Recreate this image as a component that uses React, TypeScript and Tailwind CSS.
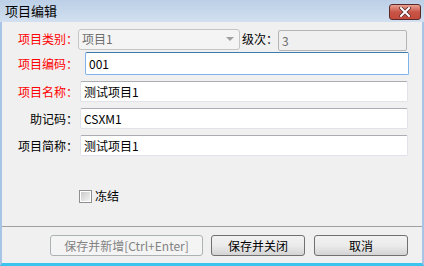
import React from "react";

const cjk = { fontFamily: '"Noto Sans CJK SC", "Liberation Sans", sans-serif' };

function Label({ text, red, w }: { text: string; red?: boolean; w: string }) {
  return (
    <div
      className={`${w} shrink-0 text-right text-[12px] leading-[14px] ${red ? "text-[#ff0000]" : "text-black"}`}
      style={cjk}
    >
      {text}
    </div>
  );
}

function TextBox({ value, focused, className }: { value: string; focused?: boolean; className: string }) {
  return (
    <div
      className={`${className} flex items-center bg-white border rounded-[2px] pl-[3px] text-[12px] text-black ${
        focused
          ? "border-[#7eb4ea] border-t-[#3d7bad]"
          : "border-[#e2e3ea] border-t-[#abadb3]"
      }`}
      style={cjk}
    >
      {value}
    </div>
  );
}

export default function App() {
  return (
    <div className="w-[424px] h-[266px] flex flex-col bg-[#f0f0f0] overflow-hidden" style={cjk}>
      {/* title bar */}
      <div className="h-[22px] shrink-0 flex items-center justify-between pl-[5px] pr-[3px] bg-gradient-to-b from-[#bccfe6] to-[#d2e0f0]">
        <span className="text-[13px] leading-[16px] text-black" style={cjk}>
          项目编辑
        </span>
        <div className="w-[32px] h-[16px] mt-[2px] rounded-[3px] border border-[#5a2a2a] bg-gradient-to-b from-[#e8a093] via-[#c75446] to-[#c44a3c] flex items-center justify-center">
          <svg width="12" height="10" viewBox="0 0 12 10">
            <path d="M2 1 L10 9 M10 1 L2 9" stroke="#5a2a2a" strokeWidth="3.6" strokeLinecap="square" />
            <path d="M2 1 L10 9 M10 1 L2 9" stroke="#ffffff" strokeWidth="2" strokeLinecap="square" />
          </svg>
        </div>
      </div>

      {/* client area */}
      <div className="flex-1 flex flex-col border-l-2 border-r-2 border-b-[3px] border-l-[#a7c4e6] border-r-[#a7c4e6] border-b-[#3cc3ee] bg-[#f0f0f0]">
        {/* row 1 */}
        <div className="flex items-center mt-[6px] h-[22px]">
          <Label text="项目类别：" red w="w-[76px]" />
          <div className="w-[162px] h-[21px] flex items-center justify-between border border-[#c5c5c5] rounded-[3px] bg-[#f4f4f4] pl-[3px] pr-[5px] text-[12px] text-[#6d6d6d]">
            <span>项目1</span>
            <svg width="8" height="5" viewBox="0 0 8 5">
              <path d="M0 0 L8 0 L4 4 Z" fill="#a0a0a0" />
            </svg>
          </div>
          <Label text="级次：" w="w-[38px]" />
          <div className="w-[129px] h-[21px] mt-[3px] flex items-center border border-[#b5b5b5] rounded-[2px] bg-[#f0f0f0] pl-[3px] text-[12px] text-[#6d6d6d]">
            3
          </div>
        </div>

        {/* row 2 */}
        <div className="flex items-center mt-[2px] h-[23px]">
          <Label text="项目编码：" red w="w-[76px]" />
          <TextBox value="001" focused className="ml-[7px] w-[324px] h-[23px]" />
        </div>

        {/* row 3 */}
        <div className="flex items-center mt-[6px] h-[21px]">
          <Label text="项目名称：" red w="w-[76px]" />
          <TextBox value="测试项目1" className="ml-[2px] w-[328px] h-[21px]" />
        </div>

        {/* row 4 */}
        <div className="flex items-center mt-[6px] h-[21px]">
          <Label text="助记码：" w="w-[76px]" />
          <TextBox value="CSXM1" className="ml-[2px] w-[328px] h-[21px]" />
        </div>

        {/* row 5 */}
        <div className="flex items-center mt-[6px] h-[21px]">
          <Label text="项目简称：" w="w-[76px]" />
          <TextBox value="测试项目1" className="ml-[2px] w-[328px] h-[21px]" />
        </div>

        {/* checkbox */}
        <div className="flex items-center mt-[33px] ml-[77px] h-[14px]">
          <div className="w-[13px] h-[13px] border border-[#8f8f8f] bg-white flex items-center justify-center">
            <div className="w-[9px] h-[9px] bg-gradient-to-br from-[#cbcbcb] to-[#f4f4f4]" />
          </div>
          <span className="ml-[3px] text-[12px] text-black">冻结</span>
        </div>

        {/* separator */}
        <div className="mt-[23px] h-px bg-[#a0a0a0]" />

        {/* buttons */}
        <div className="flex mt-[8px] ml-[48px] gap-[8px]">
          <div className="w-[153px] h-[21px] flex items-center justify-center rounded-[3px] border border-[#adb2b5] bg-[#f4f4f4] text-[12px] text-[#838383]">
            保存并新增[Ctrl+Enter]
          </div>
          <div className="w-[94px] h-[21px] flex items-center justify-center rounded-[3px] border border-[#707070] bg-gradient-to-b from-[#f2f2f2] via-[#ebebeb] to-[#d4d4d4] text-[12px] text-black">
            保存并关闭
          </div>
          <div className="ml-[1px] w-[94px] h-[21px] flex items-center justify-center rounded-[3px] border border-[#707070] bg-gradient-to-b from-[#f2f2f2] via-[#ebebeb] to-[#d4d4d4] text-[12px] text-black">
            取消
          </div>
        </div>
      </div>
    </div>
  );
}
